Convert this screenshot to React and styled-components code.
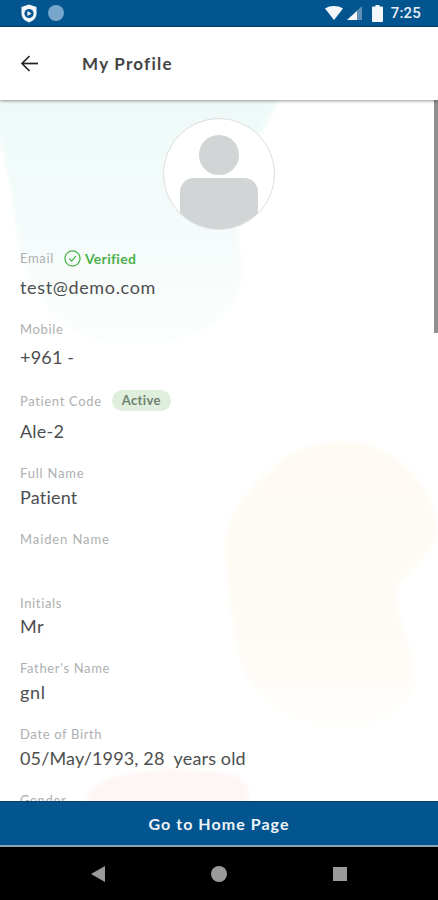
import React from "react";
import styled, { createGlobalStyle } from "styled-components";

const Global = createGlobalStyle`
  html, body { margin: 0; padding: 0; background: #fff; }
  body { font-family: "Lato", "Open Sans", sans-serif; }
  * { box-sizing: border-box; }
`;

const Screen = styled.div`
  width: 438px;
  height: 900px;
  display: flex;
  flex-direction: column;
  overflow: hidden;
  background: #fff;
`;

const StatusBar = styled.div`
  height: 27px;
  flex: none;
  background: #02558f;
  border-bottom: 1px solid #0a3f6e;
  display: flex;
  align-items: center;
  padding: 0 17px 0 21px;
  color: #f4f7fa;
`;

const StatusLeft = styled.div`
  display: flex;
  align-items: center;
  gap: 11px;
  flex: 1;
`;

const StatusDot = styled.div`
  width: 16px;
  height: 16px;
  border-radius: 50%;
  background: #78a6cc;
`;

const StatusRight = styled.div`
  display: flex;
  align-items: center;
`;

const Clock = styled.span`
  font-family: "Roboto", sans-serif;
  font-size: 15px;
  font-weight: 500;
  margin-left: 8px;
  letter-spacing: 0.2px;
  color: #e8eef4;
`;

const Header = styled.header`
  height: 73px;
  flex: none;
  display: flex;
  align-items: center;
  padding: 0 0 0 19px;
  background: #fff;
  position: relative;
  z-index: 2;
  box-shadow: 0 1px 3px rgba(0, 0, 0, 0.4);
`;

const BackButton = styled.div`
  width: 63px;
  display: flex;
  align-items: center;
  color: #222;
`;

const Title = styled.h1`
  margin: 0;
  font-size: 17px;
  font-weight: 700;
  letter-spacing: 1.25px;
  color: #444;
`;

const Content = styled.main`
  flex: 1;
  min-height: 0;
  position: relative;
  overflow: hidden;
  padding: 18px 20px 0;
`;

const Blobs = styled.svg`
  position: absolute;
  left: 0;
  top: 0;
  width: 438px;
  height: 702px;
`;

const Scrollbar = styled.div`
  position: absolute;
  right: 0;
  top: 0;
  width: 4px;
  height: 233px;
  background: #8f8f8f;
`;

const Avatar = styled.div`
  position: relative;
  width: 112px;
  height: 112px;
  margin: 0 auto;
  border-radius: 50%;
  border: 1px solid #dcdedf;
  background: #fff;
  overflow: hidden;
  display: flex;
  flex-direction: column;
  align-items: center;
`;

const AvatarHead = styled.div`
  width: 40px;
  height: 40px;
  margin-top: 16px;
  border-radius: 50%;
  background: #d2d5d5;
  flex: none;
`;

const AvatarBody = styled.div`
  width: 78px;
  height: 60px;
  margin-top: 3px;
  border-radius: 14px 14px 0 0;
  background: #d2d5d5;
  flex: none;
`;

const Fields = styled.div`
  position: relative;
  padding-top: 18px;
`;

const Field = styled.div`
  margin-bottom: ${(p) => p.$after}px;
`;

const LabelRow = styled.div`
  display: flex;
  align-items: center;
  height: 20px;
  margin-bottom: ${(p) => p.$gap}px;
`;

const Label = styled.span`
  font-size: 13px;
  letter-spacing: ${(p) => p.$spacing ?? 0.65}px;
  color: #adb0b1;
`;

const Value = styled.div`
  height: 24px;
  line-height: 24px;
  font-size: 18px;
  letter-spacing: ${(p) => p.$spacing ?? 0.2}px;
  color: #4d4e4f;
  white-space: pre;
`;

const Verified = styled.span`
  display: inline-flex;
  align-items: center;
  gap: 4px;
  margin-left: 10px;
  font-size: 14px;
  font-weight: 700;
  letter-spacing: 0.3px;
  color: #4cb04c;
`;

const ActiveBadge = styled.span`
  margin-left: 10px;
  height: 21px;
  margin-top: -2px;
  padding: 0 10px;
  display: inline-flex;
  align-items: center;
  border-radius: 11px;
  background: #dfeedd;
  color: #6f7f6f;
  font-size: 13px;
  font-weight: 700;
  letter-spacing: 0.4px;
`;

const HomeButton = styled.div`
  height: 46px;
  flex: none;
  position: relative;
  z-index: 2;
  background: #02558f;
  border-top: 1px solid #0a3f6e;
  border-bottom: 2px solid #8fa3b5;
  color: #eef3f8;
  font-size: 16px;
  font-weight: 700;
  letter-spacing: 1.05px;
  display: flex;
  align-items: center;
  justify-content: center;
`;

const NavBar = styled.nav`
  height: 53px;
  flex: none;
  background: #000;
  display: flex;
  align-items: center;
  justify-content: center;
  gap: 106px;
`;

const NavCircle = styled.div`
  width: 16px;
  height: 16px;
  border-radius: 50%;
  background: #9a9a9a;
`;

const NavSquare = styled.div`
  width: 14px;
  height: 14px;
  background: #9a9a9a;
`;

export default function App() {
  return (
    <Screen>
      <Global />
      <StatusBar>
        <StatusLeft>
          <svg width="16" height="19" viewBox="0 0 16 19">
            <path d="M8 0.5 L15.5 3 V9.5 C15.5 14 12 17 8 18.5 C4 17 0.5 14 0.5 9.5 V3 Z" fill="#f4f7fa" />
            <circle cx="8" cy="9.5" r="4.6" fill="#02558f" />
            <path d="M6.4 7 L10.6 9.5 L6.4 12 Z" fill="#f4f7fa" />
          </svg>
          <StatusDot />
        </StatusLeft>
        <StatusRight>
          <svg width="18" height="14" viewBox="0 0 18 14" style={{ marginRight: 4 }}>
            <path d="M0 2.5 C5 -0.8 13 -0.8 18 2.5 L9 14 Z" fill="#f4f7fa" />
          </svg>
          <svg width="16" height="14" viewBox="0 0 16 14" style={{ marginRight: 9 }}>
            <path d="M15 0 V14 H0 Z" fill="#5f8fb5" />
            <path d="M10 5 V14 H0 Z" fill="#f4f7fa" />
          </svg>
          <svg width="11" height="17" viewBox="0 0 11 17">
            <path d="M3.5 0 H7.5 V1.5 H10 A1 1 0 0 1 11 2.5 V16 A1 1 0 0 1 10 17 H1 A1 1 0 0 1 0 16 V2.5 A1 1 0 0 1 1 1.5 H3.5 Z" fill="#f4f7fa" />
          </svg>
          <Clock>7:25</Clock>
        </StatusRight>
      </StatusBar>

      <Header>
        <BackButton>
          <svg width="21" height="21" viewBox="0 0 21 21" fill="none" stroke="#222" strokeWidth="1.7">
            <path d="M19 10.5 H3" />
            <path d="M10.5 3 L3 10.5 L10.5 18" />
          </svg>
        </BackButton>
        <Title>My Profile</Title>
      </Header>

      <Content>
        <Blobs viewBox="0 100 438 702">
          <defs>
            <linearGradient id="teal" x1="0" y1="0" x2="0" y2="1">
              <stop offset="0" stopColor="#eefaf8" />
              <stop offset="0.45" stopColor="#f3fbfa" />
              <stop offset="0.75" stopColor="#f8fdfc" />
              <stop offset="1" stopColor="#fcfefe" />
            </linearGradient>
            <linearGradient id="cream" x1="0" y1="0" x2="0" y2="1">
              <stop offset="0" stopColor="#fefaf3" />
              <stop offset="0.6" stopColor="#fefbf5" />
              <stop offset="1" stopColor="#fffefb" />
            </linearGradient>
            <filter id="soft" x="-5%" y="-5%" width="110%" height="110%">
              <feGaussianBlur stdDeviation="2" />
            </filter>
          </defs>
          <path
            d="M-6 94 H280 C270 130 240 150 236 190 C233 225 245 255 240 285 C235 320 190 345 130 345 C70 345 28 300 18 240 C12 190 5 150 -6 125 Z"
            fill="url(#teal)"
            filter="url(#soft)"
          />
          <path
            d="M345 442 C390 442 432 480 437 527 C438 555 402 570 397 590 C395 615 412 640 415 680 C415 710 375 730 335 727 C290 722 250 705 238 653 C232 625 228 590 225 553 C225 510 250 490 270 470 C290 450 315 442 345 442 Z"
            fill="url(#cream)"
            filter="url(#soft)"
          />
          <path
            d="M83 806 C90 785 105 778 125 775 C150 770 170 768 190 770 C215 772 240 772 246 785 C249 792 248 798 248 806 Z"
            fill="#fdf6f4"
            filter="url(#soft)"
          />
        </Blobs>
        <Scrollbar />
        <Avatar>
          <AvatarHead />
          <AvatarBody />
        </Avatar>
        <Fields>
          <Field $after={20}>
            <LabelRow $gap={7}>
              <Label>Email</Label>
              <Verified>
                <svg width="17" height="17" viewBox="0 0 18 18" fill="none" stroke="#4cb04c" strokeWidth="1.3">
                  <circle cx="9" cy="9" r="8" />
                  <path d="M5.5 9.2 L8 11.7 L12.5 6.5" />
                </svg>
                Verified
              </Verified>
            </LabelRow>
            <Value $spacing={0.65}>test@demo.com</Value>
          </Field>
          <Field $after={22}>
            <LabelRow $gap={6}>
              <Label>Mobile</Label>
            </LabelRow>
            <Value>+961 -</Value>
          </Field>
          <Field $after={20}>
            <LabelRow $gap={8}>
              <Label>Patient Code</Label>
              <ActiveBadge>Active</ActiveBadge>
            </LabelRow>
            <Value>Ale-2</Value>
          </Field>
          <Field $after={20}>
            <LabelRow $gap={2}>
              <Label $spacing={0.8}>Full Name</Label>
            </LabelRow>
            <Value>Patient</Value>
          </Field>
          <Field $after={44}>
            <LabelRow $gap={0}>
              <Label $spacing={0.9}>Maiden Name</Label>
            </LabelRow>
          </Field>
          <Field $after={20}>
            <LabelRow $gap={1}>
              <Label>Initials</Label>
            </LabelRow>
            <Value $spacing={0.5}>Mr</Value>
          </Field>
          <Field $after={20}>
            <LabelRow $gap={2}>
              <Label>Father's Name</Label>
            </LabelRow>
            <Value $spacing={0.7}>gnl</Value>
          </Field>
          <Field $after={20}>
            <LabelRow $gap={2}>
              <Label>Date of Birth</Label>
            </LabelRow>
            <Value $spacing={0.15}>05/May/1993, 28  years old</Value>
          </Field>
          <Field $after={0}>
            <LabelRow $gap={2}>
              <Label>Gender</Label>
            </LabelRow>
          </Field>
        </Fields>
      </Content>

      <HomeButton>Go to Home Page</HomeButton>
      <NavBar>
        <svg width="14" height="16" viewBox="0 0 14 16">
          <path d="M14 0 V16 L0 8 Z" fill="#9a9a9a" />
        </svg>
        <NavCircle />
        <NavSquare />
      </NavBar>
    </Screen>
  );
}
